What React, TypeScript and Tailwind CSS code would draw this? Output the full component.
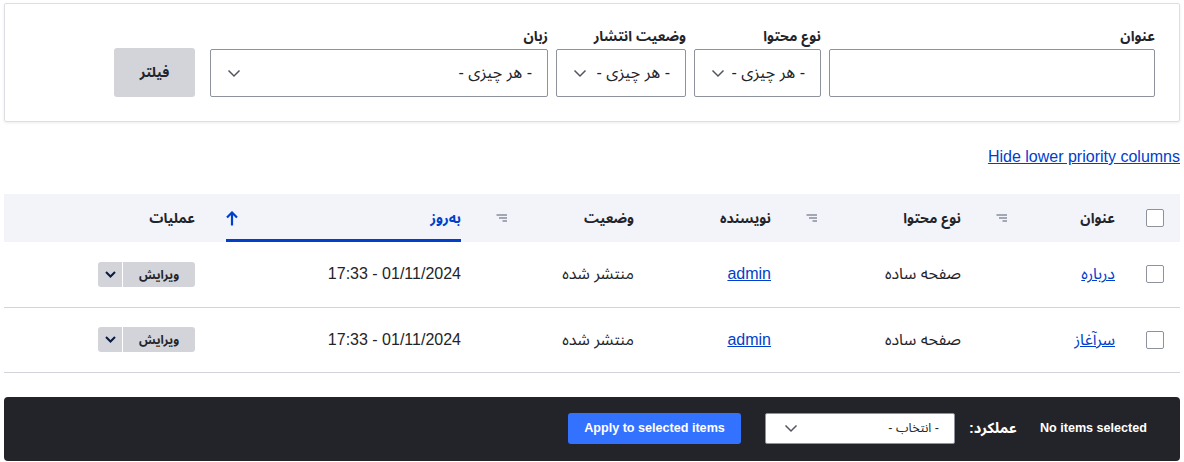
import React from "react";

const font = "font-['Liberation_Sans','Noto_Sans_Arabic','Noto_Naskh_Arabic',sans-serif]";

function Chevron({ className = "" }: { className?: string }) {
  return (
    <svg className={className} width="14" height="9" viewBox="0 0 14 9" fill="none">
      <path d="M1.5 1.5 7 7l5.5-5.5" stroke="currentColor" strokeWidth="1.5" />
    </svg>
  );
}

function SortIcon() {
  return (
    <svg width="12" height="9" viewBox="0 0 12 9" className="text-[#a3a7b3]">
      <rect x="1.5" y="0" width="10.5" height="2" fill="currentColor" />
      <rect x="4" y="3" width="8" height="2" fill="currentColor" />
      <rect x="7.5" y="6" width="4.5" height="2" fill="currentColor" />
    </svg>
  );
}

function FakeSelect({ width, text }: { width: string; text: string }) {
  return (
    <div
      className={`${width} h-[48px] border border-[#8e929c] rounded-[2px] bg-white flex items-center justify-between pr-[15px] pl-[16px] text-[16px] text-[#232429]`}
    >
      <span>{text}</span>
      <Chevron className="text-[#545560]" />
    </div>
  );
}

function Field({ label, children }: { label: string; children: React.ReactNode }) {
  return (
    <div className="flex flex-col">
      <label className="text-[14px] font-bold leading-[18px] mb-[4px] text-[#232429]">{label}</label>
      {children}
    </div>
  );
}

function Checkbox() {
  return <div className="w-[18px] h-[18px] border border-[#8e929c] rounded-[2px] bg-white" />;
}

function EditButton() {
  return (
    <div className="inline-flex h-[25px] rounded-[3px] bg-[#d3d4d9] overflow-hidden">
      <span className="w-[72px] flex items-center justify-center text-[12px] font-bold text-[#232429]">ویرایش</span>
      <span className="w-px bg-white" />
      <span className="w-[24px] flex items-center justify-center text-[#0a1a40]">
        <svg width="11" height="7" viewBox="0 0 11 7" fill="none">
          <path d="M1 1l4.5 4.5L10 1" stroke="currentColor" strokeWidth="2" />
        </svg>
      </span>
    </div>
  );
}

const rows = [{ title: "درباره" }, { title: "سرآغاز" }];

export default function App() {
  return (
    <div dir="rtl" className={`${font} bg-white w-full h-[462px] pt-[3px] px-1 text-[#232429]`}>
      {/* Filters */}
      <div className="h-[119px] border border-[#dedfe4] rounded-[2px] shadow-[0_1px_3px_rgba(0,0,0,0.08)] pt-[23px] pr-[24px]">
        <div className="flex items-end">
          <Field label="عنوان">
            <div className="w-[326px] h-[48px] border border-[#8e929c] rounded-[2px] bg-white" />
          </Field>
          <div className="mr-2">
            <Field label="نوع محتوا">
              <FakeSelect width="w-[127px]" text="- هر چیزی -" />
            </Field>
          </div>
          <div className="mr-2">
            <Field label="وضعیت انتشار">
              <FakeSelect width="w-[130px]" text="- هر چیزی -" />
            </Field>
          </div>
          <div className="mr-2">
            <Field label="زبان">
              <FakeSelect width="w-[338px]" text="- هر چیزی -" />
            </Field>
          </div>
          <button className="mr-[15px] w-[81px] h-[49px] rounded-[3px] bg-[#d3d4d9] text-[14px] font-bold text-[#232429]">
            فیلتر
          </button>
        </div>
      </div>

      {/* Link */}
      <div className="mt-[23px] h-[24px] leading-[24px] flex">
        <a href="#" dir="ltr" className="text-[16px] text-[#003ecc] underline">
          Hide lower priority columns
        </a>
      </div>

      {/* Table */}
      <table className="mt-[25px] w-full table-fixed border-collapse">
        <colgroup>
          <col className="w-[49px]" />
          <col className="w-[154px]" />
          <col className="w-[190px]" />
          <col className="w-[137px]" />
          <col className="w-[173px]" />
          <col className="w-[267px]" />
          <col />
        </colgroup>
        <thead>
          <tr className="bg-[#f3f4f9] h-[48px] text-[14px] font-bold">
            <th className="pr-4 text-right">
              <Checkbox />
            </th>
            <th className="px-4">
              <div className="flex items-center justify-between pl-[2px]">
                <span>عنوان</span>
                <SortIcon />
              </div>
            </th>
            <th className="px-4">
              <div className="flex items-center justify-between pl-[2px]">
                <span>نوع محتوا</span>
                <SortIcon />
              </div>
            </th>
            <th className="px-4 text-right">نویسنده</th>
            <th className="px-4">
              <div className="flex items-center justify-between pl-[2px]">
                <span>وضعیت</span>
                <SortIcon />
              </div>
            </th>
            <th className="px-4 h-[48px] align-bottom">
              <div className="h-[48px] flex items-center justify-between border-b-[3px] border-[#003ecc] pt-[3px] text-[#003ecc]">
                <span>به‌روز</span>
                <svg width="12" height="15" viewBox="0 0 12 15" fill="none">
                  <path d="M6 14.5V2M1 6.5 6 1.5l5 5" stroke="currentColor" strokeWidth="2.2" />
                </svg>
              </div>
            </th>
            <th className="px-4 text-right pr-[15px]">عملیات</th>
          </tr>
        </thead>
        <tbody className="text-[16px]">
          {rows.map((r) => (
            <tr key={r.title} className="h-[65px] border-b border-[#d3d4d9]">
              <td className="pr-4">
                <Checkbox />
              </td>
              <td className="px-4">
                <a href="#" className="text-[#003ecc] underline">
                  {r.title}
                </a>
              </td>
              <td className="px-4">صفحه ساده</td>
              <td className="px-4">
                <a href="#" className="text-[#003ecc] underline">
                  admin
                </a>
              </td>
              <td className="px-4">منتشر شده</td>
              <td className="px-4">
                <span dir="ltr">17:33 - 01/11/2024</span>
              </td>
              <td className="pr-[15px]">
                <EditButton />
              </td>
            </tr>
          ))}
        </tbody>
      </table>

      {/* Bulk actions bar */}
      <div className="mt-[24px] h-[64px] rounded-[4px] bg-[#232429] flex items-center pr-[33px] text-white text-[12.6px] font-bold">
        <span dir="ltr">No items selected</span>
        <span className="mr-[23px] text-[14.5px]">عملکرد:</span>
        <div className="mr-[14px] w-[190px] h-[31px] bg-white rounded-[2px] border border-[#8e929c] flex items-center justify-between pr-[15px] pl-[18px] text-[#232429] font-normal text-[12.6px]">
          <span>- انتخاب -</span>
          <Chevron className="text-[#545560]" />
        </div>
        <button dir="ltr" className="mr-[24px] w-[173px] h-[31px] rounded-[3px] bg-[#3371ff] text-white font-bold text-[12.6px]">
          Apply to selected items
        </button>
      </div>
    </div>
  );
}
